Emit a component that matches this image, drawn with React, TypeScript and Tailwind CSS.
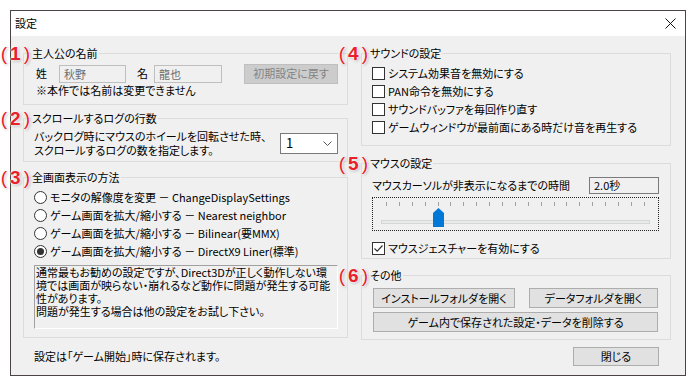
import React from 'react';

const Badge = ({ n }: { n: string }) => (
  <span className="absolute right-full top-1/2 -translate-y-1/2 mr-[1px] whitespace-nowrap text-[#e8202a] text-[19px] leading-none font-['Liberation_Sans',sans-serif] [text-shadow:0_0_1px_#fff,0_0_2px_#fff,0_0_3px_#fff,1px_1px_3px_rgba(0,0,0,0.35)]">
    (<span className="font-bold px-[3px]">{n}</span>)
  </span>
);

const Group = ({
  n,
  title,
  className,
  children,
}: {
  n: string;
  title: string;
  className: string;
  children: React.ReactNode;
}) => (
  <fieldset className={`min-w-0 border border-[#dcdcdc] ${className}`}>
    <legend className="relative ml-[7px] px-[1px] leading-[16px]">
      <Badge n={n} />
      {title}
    </legend>
    {children}
  </fieldset>
);

const Radio = ({ label, checked }: { label: string; checked?: boolean }) => (
  <div className="flex items-center h-[18px]">
    <span className="w-[13px] h-[13px] rounded-full border border-[#333] bg-white flex items-center justify-center">
      {checked && <span className="w-[7px] h-[7px] rounded-full bg-[#333]" />}
    </span>
    <span className="ml-[3px]">{label}</span>
  </div>
);

const Check = ({ label, checked }: { label: string; checked?: boolean }) => (
  <div className="flex items-center h-[18px]">
    <span className="w-[13px] h-[13px] border border-[#333] bg-white flex items-center justify-center">
      {checked && (
        <svg width="11" height="11" viewBox="0 0 11 11">
          <polyline points="1.5,5.5 4.2,8.2 9.5,2.5" fill="none" stroke="#333" strokeWidth="1.2" />
        </svg>
      )}
    </span>
    <span className="ml-[3px]">{label}</span>
  </div>
);

const Button = ({ label, className }: { label: string; className: string }) => (
  <button className={`bg-[#e1e1e1] border border-[#adadad] flex items-center justify-center leading-none ${className}`}>
    {label}
  </button>
);

export default function App() {
  const ticks = Array.from({ length: 21 }, (_, i) => i);
  return (
    <div className="w-[696px] h-[386px] bg-white pt-[10px] pl-[10px] text-[11px] text-black font-['Noto_Sans_CJK_JP',sans-serif] [font-feature-settings:'palt']">
      <div className="w-[676px] h-[366px] border border-[#4a4444] flex flex-col">
        {/* タイトルバー */}
        <div className="h-[25px] bg-white flex items-center justify-between pl-[4px] pr-[9px]">
          <span>設定</span>
          <svg width="11" height="11" viewBox="0 0 11 11">
            <path d="M0.5 0.5 L10.5 10.5 M10.5 0.5 L0.5 10.5" stroke="#111" strokeWidth="1" />
          </svg>
        </div>

        <div className="flex-1 bg-[#f0f0f0] pl-[12px] pt-[9px]">
          <div className="flex gap-[13px]">
            {/* 左カラム */}
            <div className="w-[325px] flex flex-col">
              <Group n="1" title="主人公の名前" className="h-[60px]">
                <div className="pl-[12px] pr-[9px]">
                  <div className="flex items-center h-[19px] mt-[3px]">
                    <span>姓</span>
                    <div className="ml-[12px] w-[67px] h-[18px] border border-[#bfbfbf] bg-[#f0f0f0] text-[#6d6d6d] pl-[4px] leading-[16px]">秋野</div>
                    <span className="ml-[11px]">名</span>
                    <div className="ml-[6px] w-[68px] h-[18px] border border-[#bfbfbf] bg-[#f0f0f0] text-[#6d6d6d] pl-[4px] leading-[16px]">龍也</div>
                    <div className="ml-auto w-[94px] h-[20px] border border-[#bfbfbf] bg-[#cccccc] text-[#838383] flex items-center justify-center">
                      初期設定に戻す
                    </div>
                  </div>
                  <div className="leading-[14px]">※本作では名前は変更できません</div>
                </div>
              </Group>

              <Group n="2" title="スクロールするログの行数" className="h-[52px] mt-[5px]">
                <div className="pl-[10px] pr-[9px] flex items-center mt-[3px]">
                  <div className="leading-[14px] whitespace-nowrap">
                    バックログ時にマウスのホイールを回転させた時、
                    <br />
                    スクロールするログの数を指定します。
                  </div>
                  <div className="ml-auto w-[58px] h-[21px] border border-[#7a7a7a] bg-white flex items-center justify-between pl-[5px] pr-[5px]">
                    <span className="text-[13px]">1</span>
                    <svg width="9" height="5" viewBox="0 0 9 5">
                      <polyline points="0.5,0.5 4.5,4.5 8.5,0.5" fill="none" stroke="#555" strokeWidth="1" />
                    </svg>
                  </div>
                </div>
              </Group>

              <Group n="3" title="全画面表示の方法" className="h-[169px] mt-[7px]">
                <div className="pl-[10px] pr-[9px] mt-[3px]">
                  <Radio label="モニタの解像度を変更 － ChangeDisplaySettings" />
                  <Radio label="ゲーム画面を拡大/縮小する － Nearest neighbor" />
                  <Radio label="ゲーム画面を拡大/縮小する － Bilinear(要MMX)" />
                  <Radio label="ゲーム画面を拡大/縮小する － DirectX9 Liner(標準)" checked />
                  <div className="mt-[5px] h-[64px] border border-[#a0a0a0] border-r-white border-b-white pl-[1px] leading-[13px] whitespace-nowrap overflow-hidden">
                    通常最もお勧めの設定ですが、Direct3Dが正しく動作しない環
                    <br />
                    境では画面が映らない・崩れるなど動作に問題が発生する可能
                    <br />
                    性があります。
                    <br />
                    問題が発生する場合は他の設定をお試し下さい。
                  </div>
                </div>
              </Group>
            </div>

            {/* 右カラム */}
            <div className="w-[310px] flex flex-col">
              <Group n="4" title="サウンドの設定" className="h-[101px]">
                <div className="pl-[10px] mt-[3px]">
                  <Check label="システム効果音を無効にする" />
                  <Check label="PAN命令を無効にする" />
                  <Check label="サウンドバッファを毎回作り直す" />
                  <Check label="ゲームウィンドウが最前面にある時だけ音を再生する" />
                </div>
              </Group>

              <Group n="5" title="マウスの設定" className="h-[104px] mt-[9px]">
                <div className="pl-[10px] pr-[11px]">
                  <div className="flex items-center justify-between h-[18px] mt-[5px]">
                    <span>マウスカーソルが非表示になるまでの時間</span>
                    <div className="w-[70px] h-[17px] border border-[#7a7a7a] bg-[#f0f0f0] pl-[4px] leading-[15px]">2.0秒</div>
                  </div>
                  <div className="mt-[3px] h-[34px] border border-dotted border-[#222] relative">
                    <div className="flex justify-between mx-[13px] mt-[4px] h-[4px]">
                      {ticks.map((i) => (
                        <span key={i} className="w-px h-[4px] bg-[#a0a0a0]" />
                      ))}
                    </div>
                    <div className="mx-[8px] mt-[14px] h-[4px] bg-[#e7eaea] border border-[#d6d6d6]" />
                    <svg className="absolute left-[60px] top-[10px]" width="11" height="19" viewBox="0 0 11 19">
                      <path d="M0 5 L5.5 0 L11 5 L11 19 L0 19 Z" fill="#0078d7" />
                    </svg>
                  </div>
                  <div className="mt-[8px]">
                    <Check label="マウスジェスチャーを有効にする" checked />
                  </div>
                </div>
              </Group>

              <Group n="6" title="その他" className="h-[73px] mt-[8px]">
                <div className="pl-[11px] pr-[12px]">
                  <div className="flex justify-between mt-[5px]">
                    <Button label="インストールフォルダを開く" className="w-[142px] h-[20px]" />
                    <Button label="データフォルダを開く" className="w-[129px] h-[20px]" />
                  </div>
                  <Button label="ゲーム内で保存された設定・データを削除する" className="w-full h-[20px] mt-[4px]" />
                </div>
              </Group>
            </div>
          </div>

          {/* フッター */}
          <div className="w-[648px] flex items-center justify-between h-[19px] mt-[7px]">
            <span className="ml-[11px]">設定は「ゲーム開始」時に保存されます。</span>
            <Button label="閉じる" className="w-[86px] h-[19px] mr-[12px]" />
          </div>
        </div>
      </div>
    </div>
  );
}
